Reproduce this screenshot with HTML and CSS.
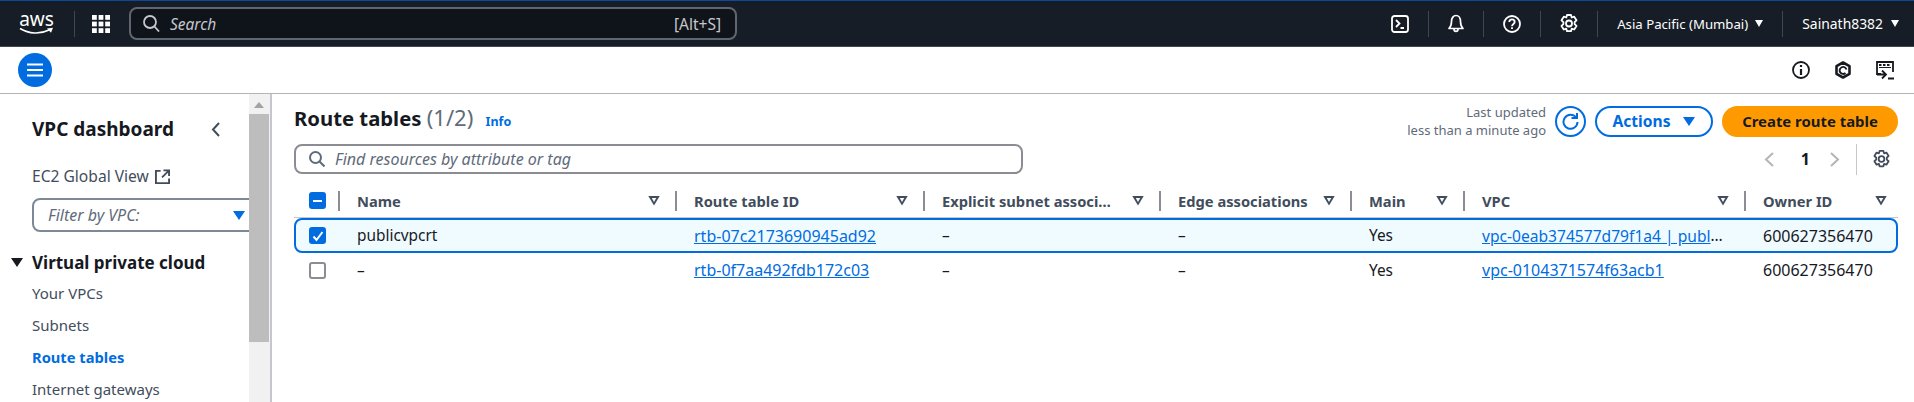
FILE: index.html
```html
<!DOCTYPE html>
<html lang="en">
<head>
    <meta charset="UTF-8">
    <meta name="viewport" content="width=device-width, initial-scale=1.0">
    <title>Route tables | VPC Console</title>
    <link rel="stylesheet" href="styles.css">
</head>
<body>
    <header class="top-nav">
        <div class="aws-logo">
            <span class="aws-word">aws</span>
            <svg class="aws-smile" width="35" height="9" viewBox="0 0 35 9"><path d="M1 1.500c9 5.500 20 6 29 1.500" fill="none" stroke="#fff" stroke-width="1.600"/><path d="M28 1.500l6-.8-2 5z" fill="#fff"/></svg>
        </div>
        <span class="nav-sep logo-sep"></span>
        <svg class="grid-icon" width="18" height="18" viewBox="0 0 18 18" fill="#fff">
            <rect x="0" y="0" width="4.800" height="4.800"/><rect x="6.600" y="0" width="4.800" height="4.800"/><rect x="13.200" y="0" width="4.800" height="4.800"/>
            <rect x="0" y="6.600" width="4.800" height="4.800"/><rect x="6.600" y="6.600" width="4.800" height="4.800"/><rect x="13.200" y="6.600" width="4.800" height="4.800"/>
            <rect x="0" y="13.200" width="4.800" height="4.800"/><rect x="6.600" y="13.200" width="4.800" height="4.800"/><rect x="13.200" y="13.200" width="4.800" height="4.800"/>
        </svg>
        <div class="nav-search">
            <svg width="17" height="17" viewBox="0 0 17 17" fill="none" stroke="#c6c6cd" stroke-width="1.800"><circle cx="7" cy="7" r="6"/><path d="M11.500 11.500l4.500 5"/></svg>
            <span class="nav-search-text">Search</span>
            <span class="nav-search-key">[Alt+S]</span>
        </div>
        <div class="nav-right">
            <svg width="18" height="18" viewBox="0 0 18 18" fill="none" stroke="#fff" stroke-width="1.800"><rect x="1" y="1" width="16" height="16" rx="2.500"/><path d="M5 5l3.500 3.500L5 12M9.500 13h3.500"/></svg>
            <span class="nav-sep"></span>
            <svg width="16" height="19" viewBox="0 0 16 19" fill="none" stroke="#fff" stroke-width="1.700" stroke-linejoin="round"><path d="M1 14.500h14c-1.800-1.800-2.500-3-2.500-7C12.500 3.800 10.500 1.500 8 1.500S3.500 3.800 3.500 7.500c0 4-.7 5.200-2.500 7z"/><path d="M6 15c0 3.200 4 3.200 4 0"/></svg>
            <span class="nav-sep"></span>
            <svg width="18" height="18" viewBox="0 0 18 18" fill="none" stroke="#fff" stroke-width="1.800"><circle cx="9" cy="9" r="8"/><path d="M6.300 7c0-3.500 5.400-3.500 5.400 0 0 2-2.700 2-2.700 4.300"/><path d="M9 12.300v1.800"/></svg>
            <span class="nav-sep"></span>
            <svg width="18" height="19" viewBox="0 0 18 19" fill="none" stroke="#fff" stroke-width="1.800" stroke-linejoin="round"><path d="M7 1h4l.7 2.500 2.500-.8 2.300 3.600-1.900 1.800v2l1.900 1.800-2.300 3.600-2.500-.8-.7 2.500H7l-.7-2.500-2.500.8-2.300-3.600 1.900-1.800v-2L1.500 6.300l2.300-3.600 2.500.8z"/><circle cx="9" cy="9.500" r="3"/></svg>
            <span class="nav-sep"></span>
            <span class="nav-menu region">Asia Pacific (Mumbai)<i class="caret"></i></span>
            <span class="nav-sep"></span>
            <span class="nav-menu user">Sainath8382<i class="caret"></i></span>
        </div>
    </header>

    <div class="sub-bar">
        <button class="menu-btn">
            <svg width="16" height="14" viewBox="0 0 16 14" stroke="#fff" stroke-width="2"><path d="M0 1.500h16M0 7h16M0 12.500h16"/></svg>
        </button>
        <div class="sub-icons">
            <svg width="18" height="18" viewBox="0 0 18 18" fill="none" stroke="#16191f" stroke-width="1.800"><circle cx="9" cy="9" r="8"/><path d="M9 8v6" stroke-width="2.200"/><path d="M9 4v2" stroke-width="2.200"/></svg>
            <svg width="18" height="18" viewBox="0 0 18 18" fill="none" stroke="#16191f" stroke-width="2.600" stroke-linejoin="round"><path d="M9 1.500l6.500 3.700v7.600L9 16.500l-6.500-3.700V5.200z"/><path d="M12.500 8.500A3.500 3.500 0 1 0 11.500 12" stroke-width="1.900"/></svg>
            <svg width="18" height="19" viewBox="0 0 18 19" fill="none" stroke="#16191f" stroke-width="1.800"><path d="M5 13H1V1h16v10"/><path d="M3 4h2.500M7 4h2.500M11 4h2.500" stroke-width="2"/><path d="M3 6.500h12" stroke-width="1"/><path d="M6 9.500l4 4-4 4M1 13.500h8M12 17.500h6"/></svg>
        </div>
    </div>

    <div class="layout">
        <aside class="sidebar">
            <div class="side-scroll">
                <div class="side-head">
                    <h2>VPC dashboard</h2>
                    <svg width="9" height="15" viewBox="0 0 9 15" fill="none" stroke="#414d5c" stroke-width="2"><path d="M8 1L2 7.500 8 14"/></svg>
                </div>
                <a class="side-link ec2-link">EC2 Global View
                    <svg width="15" height="15" viewBox="0 0 16 16" fill="none" stroke="#414d5c" stroke-width="2"><path d="M6 2H1v13h14V10M9 1.500h6v6M15 1.500L7.500 9"/></svg>
                </a>
                <div class="vpc-filter"><span>Filter by VPC:</span><i class="caret blue"></i></div>
                <div class="side-group"><i class="caret dark"></i>Virtual private cloud</div>
                <a class="side-link">Your VPCs</a>
                <a class="side-link">Subnets</a>
                <a class="side-link active">Route tables</a>
                <a class="side-link">Internet gateways</a>
            </div>
            <div class="scrollbar">
                <div class="scroll-up"></div>
                <div class="scroll-thumb"></div>
            </div>
        </aside>

        <main class="content">
            <div class="title-row">
                <h1>Route tables <span class="count">(1/2)</span> <a class="info">Info</a></h1>
                <div class="actions">
                    <div class="updated">Last updated<br>less than a minute ago</div>
                    <button class="btn refresh">
                        <svg width="17" height="17" viewBox="0 0 17 17" fill="none" stroke="#006ce0" stroke-width="2"><path d="M14 4.500A7 7 0 1 0 15.500 9"/><path d="M9.500 5h5.500V0"/></svg>
                    </button>
                    <button class="btn actions-btn">Actions<i class="caret blue"></i></button>
                    <button class="btn create-btn">Create route table</button>
                </div>
            </div>

            <div class="filter-row">
                <div class="find-box">
                    <svg width="16" height="16" viewBox="0 0 16 16" fill="none" stroke="#5f6b7a" stroke-width="2"><circle cx="6.500" cy="6.500" r="5.500"/><path d="M10.500 10.500l5 5"/></svg>
                    <span>Find resources by attribute or tag</span>
                </div>
                <div class="pager">
                    <svg width="10" height="15" viewBox="0 0 10 15" fill="none" stroke="#b4b4bb" stroke-width="2"><path d="M9 1L2 7.500 9 14"/></svg>
                    <b>1</b>
                    <svg width="10" height="15" viewBox="0 0 10 15" fill="none" stroke="#b4b4bb" stroke-width="2"><path d="M1 1l7 6.500L1 14"/></svg>
                    <span class="pager-sep"></span>
                    <svg width="17" height="18" viewBox="0 0 18 19" fill="none" stroke="#414d5c" stroke-width="1.900" stroke-linejoin="round"><path d="M7 1h4l.7 2.500 2.500-.8 2.300 3.600-1.900 1.800v2l1.900 1.800-2.300 3.600-2.500-.8-.7 2.500H7l-.7-2.500-2.500.8-2.300-3.600 1.900-1.800v-2L1.500 6.300l2.300-3.600 2.500.8z"/><circle cx="9" cy="9.500" r="3"/></svg>
                </div>
            </div>

            <div class="table">
                <div class="row head">
                    <div class="cell check"><span class="box on"><svg width="11" height="10" viewBox="0 0 11 10" stroke="#fff" stroke-width="2"><path d="M1 5h9"/></svg></span></div>
                    <div class="cell">Name<i class="sort"></i></div>
                    <div class="cell">Route table ID<i class="sort"></i></div>
                    <div class="cell">Explicit subnet associ…<i class="sort"></i></div>
                    <div class="cell">Edge associations<i class="sort"></i></div>
                    <div class="cell">Main<i class="sort"></i></div>
                    <div class="cell">VPC<i class="sort"></i></div>
                    <div class="cell last">Owner ID<i class="sort"></i></div>
                </div>
                <div class="row selected">
                    <div class="cell check"><span class="box on"><svg width="12" height="12" viewBox="0 0 12 12" fill="none" stroke="#fff" stroke-width="2"><path d="M1.500 6.500l3 3.500 6-8"/></svg></span></div>
                    <div class="cell">publicvpcrt</div>
                    <div class="cell"><a>rtb-07c2173690945ad92</a></div>
                    <div class="cell">–</div>
                    <div class="cell">–</div>
                    <div class="cell">Yes</div>
                    <div class="cell clip"><a>vpc-0eab374577d79f1a4 | publ</a><span class="more">…</span></div>
                    <div class="cell num">600627356470</div>
                </div>
                <div class="row">
                    <div class="cell check"><span class="box"></span></div>
                    <div class="cell">–</div>
                    <div class="cell"><a>rtb-0f7aa492fdb172c03</a></div>
                    <div class="cell">–</div>
                    <div class="cell">–</div>
                    <div class="cell">Yes</div>
                    <div class="cell"><a>vpc-0104371574f63acb1</a></div>
                    <div class="cell num">600627356470</div>
                </div>
            </div>
        </main>
    </div>
</body>
</html>
```

FILE: styles.css
```css
* {
    box-sizing: border-box;
}
html, body {
    height: 402px;
    overflow: hidden;
}
body {
    margin: 0;
    font-family: "Noto Sans", Arial, sans-serif;
    font-size: 15px;
    color: #16191f;
    background-color: #fff;
}
button {
    font-family: inherit;
}
.caret {
    display: inline-block;
    width: 0;
    height: 0;
    border-left: 4.500px solid transparent;
    border-right: 4.500px solid transparent;
    border-top: 7px solid #fff;
}
.caret.blue {
    border-left-width: 6px;
    border-right-width: 6px;
    border-top: 9px solid #006ce0;
}
.caret.dark {
    border-left-width: 6px;
    border-right-width: 6px;
    border-top: 9px solid #16191f;
}

/* top nav */
.top-nav {
    display: flex;
    align-items: center;
    height: 47px;
    padding: 0 15px 0 19px;
    background-color: #161d26;
    border-top: 1px solid #0a4a9c;
    border-bottom: 1px solid #414750;
    color: #fff;
}
.aws-logo {
    display: flex;
    flex-direction: column;
    align-items: center;
    width: 35px;
}
.aws-word {
    font-size: 19px;
    line-height: 14px;
    height: 15px;
}
.nav-sep {
    width: 1px;
    height: 26px;
    background-color: #414750;
}
.logo-sep {
    margin: 0 17px 0 20px;
}
.nav-search {
    display: flex;
    align-items: center;
    width: 608px;
    height: 33px;
    margin-left: 19px;
    padding: 0 14px 0 12px;
    background-color: #0f141a;
    border: 2px solid #5f6670;
    border-radius: 8px;
    color: #c6c6cd;
}
.nav-search-text {
    margin-left: 10px;
    font-size: 15.500px;
    font-style: italic;
}
.nav-search-key {
    margin-left: auto;
    font-size: 15.500px;
}
.nav-right {
    display: flex;
    align-items: center;
    gap: 19px;
    margin-left: auto;
}
.nav-menu {
    display: flex;
    align-items: center;
    gap: 7px;
    font-size: 13.200px;
}
.nav-menu.user {
    gap: 8px;
    font-size: 13.900px;
}

/* second bar */
.sub-bar {
    display: flex;
    align-items: center;
    justify-content: space-between;
    height: 47px;
    padding: 0 20px 0 18px;
    border-bottom: 1px solid #b4b4bb;
}
.menu-btn {
    display: flex;
    align-items: center;
    justify-content: center;
    width: 34px;
    height: 34px;
    padding: 0;
    border: 0;
    border-radius: 50%;
    background-color: #006ce0;
}
.sub-icons {
    display: flex;
    align-items: center;
    gap: 24px;
}

/* sidebar */
.layout {
    display: flex;
    height: 308px;
}
.sidebar {
    display: flex;
    flex: none;
    width: 272px;
    border-right: 2px solid #c6c6cd;
    overflow: hidden;
}
.side-scroll {
    flex: none;
    width: 249px;
    padding: 0 0 0 32px;
    overflow: hidden;
}
.side-head {
    display: flex;
    align-items: center;
    justify-content: space-between;
    height: 70px;
    padding: 0 29px 0 0;
}
.side-head h2 {
    margin: 0;
    font-size: 19px;
    font-weight: 700;
}
.side-link {
    display: flex;
    align-items: center;
    gap: 6px;
    height: 32px;
    color: #414d5c;
}
.side-link.active {
    color: #006ce0;
    font-size: 14.700px;
    font-weight: 700;
}
.ec2-link {
    height: 26px;
    margin-top: -1px;
    font-size: 15.600px;
}
.vpc-filter {
    display: flex;
    align-items: center;
    justify-content: space-between;
    width: 240px;
    height: 34px;
    margin-top: 9px;
    padding: 0 12px 0 14px;
    border: 2px solid #7d8998;
    border-radius: 8px;
    color: #5f6b7a;
    font-size: 16px;
    font-style: italic;
}
.vpc-filter .caret {
    margin-right: 13px;
}
.side-group {
    position: relative;
    height: 28px;
    margin-top: 17px;
    font-size: 17px;
    font-weight: 700;
    line-height: 28px;
}
.side-group .caret {
    position: absolute;
    left: -21px;
    top: 9px;
}
.scrollbar {
    flex: none;
    width: 21px;
    padding-right: 1px;
    background-color: #f1f1f1;
}
.scroll-up {
    width: 0;
    margin: 8px auto 0;
    border-left: 5px solid transparent;
    border-right: 5px solid transparent;
    border-bottom: 6px solid #a3a3a3;
}
.scroll-thumb {
    height: 228px;
    margin-top: 6px;
    background-color: #bdbdbd;
}

/* main */
.content {
    flex: 1;
    min-width: 0;
    padding: 9px 16px 0 22px;
}
.title-row {
    display: flex;
    align-items: flex-start;
    justify-content: space-between;
    height: 41px;
}
.title-row h1 {
    margin: 0;
    font-size: 20.300px;
    font-weight: 700;
    line-height: 28px;
}
.count {
    color: #5f6b7a;
    font-size: 22px;
    font-weight: 400;
}
.info {
    margin-left: 7px;
    color: #006ce0;
    font-size: 12.500px;
}
.actions {
    display: flex;
    align-items: center;
    gap: 9px;
}
.updated {
    color: #5f6b7a;
    font-size: 13px;
    line-height: 18px;
    text-align: right;
}
.btn {
    display: flex;
    align-items: center;
    justify-content: center;
    height: 31px;
    padding: 0;
    border: 2px solid #006ce0;
    border-radius: 16px;
    background-color: #fff;
    color: #006ce0;
    font-size: 15.600px;
    font-weight: 700;
}
.refresh {
    width: 31px;
    border-radius: 50%;
}
.actions-btn {
    gap: 13px;
    width: 118px;
}
.create-btn {
    width: 176px;
    border: 0;
    background-color: #ff9900;
    color: #16191f;
    font-size: 14.900px;
}
.filter-row {
    display: flex;
    align-items: center;
    justify-content: space-between;
    height: 30px;
    padding-right: 8px;
}
.find-box {
    display: flex;
    align-items: center;
    gap: 10px;
    width: 729px;
    height: 30px;
    padding: 0 0 0 13px;
    border: 2px solid #8c8c94;
    border-radius: 8px;
    color: #5f6b7a;
    font-size: 16px;
    font-style: italic;
}
.pager {
    display: flex;
    align-items: center;
}
.pager b {
    margin: 0 20px 0 27px;
    font-size: 16px;
}
.pager-sep {
    width: 1px;
    height: 31px;
    margin: 0 16px 0 16px;
    background-color: #c6c6cd;
}

/* table */
.table {
    margin-top: 16px;
}
.row {
    display: grid;
    grid-template-columns: 63px 337px 248px 236px 191px 113px 281px 135px;
    align-items: center;
    height: 35px;
    padding-bottom: 1px;
}
.row.head {
    height: 28px;
    padding-bottom: 6px;
    border-bottom: 1px solid #c6c6cd;
    color: #414d5c;
    font-weight: 700;
}
.row.selected {
    padding-bottom: 0;
    background-color: #f0fbff;
    border: 2px solid #006ce0;
    border-radius: 8px;
}
.row.selected .cell {
    margin-left: -2px;
}
.cell {
    position: relative;
    display: flex;
    align-items: center;
    font-size: 15.400px;
    white-space: nowrap;
}
.head .cell {
    font-size: 14.700px;
}
.cell a {
    color: #006ce0;
    font-size: 16px;
    text-decoration: underline;
}
.cell.clip a {
    font-size: 15.600px;
}
.num {
    font-size: 16px;
}
.more {
    color: #16191f;
}
.check {
    padding-left: 15px;
}
.box {
    display: flex;
    align-items: center;
    justify-content: center;
    width: 17px;
    height: 17px;
    border: 2px solid #8c8c94;
    border-radius: 3px;
    background-color: #fff;
}
.box.on {
    border: 0;
    background-color: #006ce0;
}
.head .cell::after {
    content: "";
    position: absolute;
    right: 17px;
    top: 0;
    bottom: 0;
    width: 2px;
    height: 20px;
    margin: auto 0;
    background-color: #8c8c94;
}
.head .cell.last::after {
    display: none;
}
.sort {
    position: absolute;
    right: 34px;
    top: 50%;
    width: 12px;
    height: 10px;
    margin-top: -5px;
    background-color: #414d5c;
    clip-path: polygon(0 0, 100% 0, 50% 100%);
}
.sort::after {
    content: "";
    position: absolute;
    left: 3.500px;
    top: 2px;
    width: 5px;
    height: 4.500px;
    background-color: #fff;
    clip-path: polygon(0 0, 100% 0, 50% 100%);
}
.head .last .sort {
    right: 11px;
}
```
